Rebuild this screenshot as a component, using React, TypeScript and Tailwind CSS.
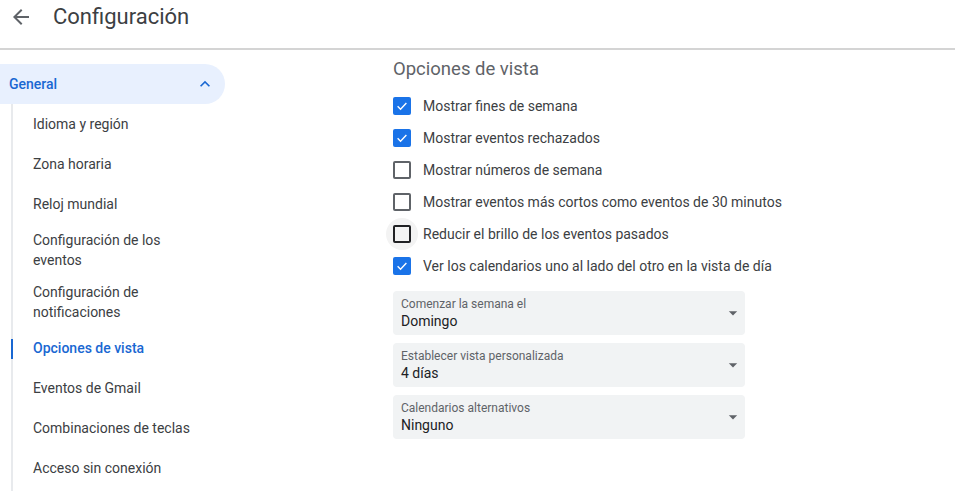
import React from 'react'

const sections = [
  { label: 'Idioma y región' },
  { label: 'Zona horaria' },
  { label: 'Reloj mundial' },
  { label: 'Configuración de los eventos' },
  { label: 'Configuración de notificaciones' },
  { label: 'Opciones de vista', active: true },
  { label: 'Eventos de Gmail' },
  { label: 'Combinaciones de teclas' },
  { label: 'Acceso sin conexión' },
]

const options = [
  { label: 'Mostrar fines de semana', checked: true },
  { label: 'Mostrar eventos rechazados', checked: true },
  { label: 'Mostrar números de semana', checked: false },
  { label: 'Mostrar eventos más cortos como eventos de 30 minutos', checked: false },
  { label: 'Reducir el brillo de los eventos pasados', checked: false, hover: true },
  { label: 'Ver los calendarios uno al lado del otro en la vista de día', checked: true },
]

const selects = [
  { label: 'Comenzar la semana el', value: 'Domingo' },
  { label: 'Establecer vista personalizada', value: '4 días' },
  { label: 'Calendarios alternativos', value: 'Ninguno' },
]

//-----------------------
//  PIECES
//-----------------------
const Checkbox = ({ checked, hover }: { checked: boolean; hover?: boolean }) => (
  <div className="relative flex items-center justify-center w-[18px] h-[18px]">
    {hover && <div className="absolute w-[32px] h-[32px] rounded-full bg-[#f3f3f3]" />}
    {checked ? (
      <div className="relative flex items-center justify-center w-[18px] h-[18px] rounded-[2px] bg-[#1a73e8]">
        <svg width="14" height="14" viewBox="0 0 24 24" fill="none">
          <path d="M4.5 12.5l5 5L19.5 7" stroke="#fff" strokeWidth="2.4" />
        </svg>
      </div>
    ) : (
      <div
        className={`relative w-[18px] h-[18px] rounded-[2px] border-2 ${
          hover ? 'border-[#202124]' : 'border-[#5f6368]'
        }`}
      />
    )}
  </div>
)

const Select = ({ label, value }: { label: string; value: string }) => (
  <div className="flex items-center w-[352px] h-[44px] pl-[8px] pr-[2px] rounded-[4px] bg-[#f1f3f4]">
    <div className="flex-1 flex flex-col">
      <span className="text-[12px] leading-[16px] text-[#5f6368]">{label}</span>
      <span className="text-[14px] leading-[18px] text-[#202124]">{value}</span>
    </div>
    <svg width="20" height="20" viewBox="0 0 24 24">
      <path d="M7 10l5 5 5-5z" fill="#5f6368" />
    </svg>
  </div>
)

//-----------------------
//  RENDER
//-----------------------
export default function App() {
  return (
    <div className="w-[955px] h-[491px] overflow-hidden bg-white text-[#3c4043] font-['Roboto',sans-serif]">
      <header className="flex items-center h-[50px] pb-[14px] border-b-2 border-[#d4d4d4]">
        <svg width="24" height="24" viewBox="0 0 24 24" className="ml-[9px]">
          <path d="M20 11H7.83l5.59-5.59L12 4l-8 8 8 8 1.41-1.41L7.83 13H20v-2z" fill="#5f6368" />
        </svg>
        <h1 className="ml-[20px] text-[22px] leading-[28px] text-[#3c4043] font-['Roboto',sans-serif]">
          Configuración
        </h1>
      </header>

      <div className="flex">
        <nav className="w-[225px] pt-[14px]">
          <div className="flex items-center justify-between h-[40px] pl-[9px] pr-[10px] rounded-r-full bg-[#e8f0fe]">
            <span className="text-[14px] font-medium text-[#1967d2]">General</span>
            <svg width="20" height="20" viewBox="0 0 24 24">
              <path d="M7.41 15.41L12 10.83l4.59 4.58L18 14l-6-6-6 6z" fill="#1967d2" />
            </svg>
          </div>
          <div className="ml-[11px] mt-[11px] border-l-2 border-[#e8eaed]">
            <ul className="-mt-[11px] pb-[10px]">
              {sections.map((item, i) => (
                <li key={i} className="relative flex items-center min-h-[40px] py-[6px] pl-[20px] pr-[16px]">
                  {item.active && (
                    <span className="absolute left-[-2px] top-[11px] bottom-[9px] w-[2px] bg-[#1967d2]" />
                  )}
                  <span
                    className={`text-[14px] leading-[20px] ${
                      item.active ? 'font-medium text-[#1967d2]' : 'text-[#3c4043]'
                    }`}
                  >
                    {item.label}
                  </span>
                </li>
              ))}
            </ul>
          </div>
        </nav>

        <main className="flex-1 pl-[168px] pt-[7px]">
          <h2 className="text-[18.5px] leading-[24px] text-[#5f6368] mb-[9px]">Opciones de vista</h2>
          <div className="flex flex-col">
            {options.map((opt, i) => (
              <label key={i} className="flex items-center h-[32px] gap-[12px]">
                <Checkbox checked={opt.checked} hover={opt.hover} />
                <span className="text-[14px] text-[#3c4043]">{opt.label}</span>
              </label>
            ))}
          </div>
          <div className="flex flex-col gap-[8px] mt-[9px]">
            {selects.map((s, i) => (
              <Select key={i} label={s.label} value={s.value} />
            ))}
          </div>
        </main>
      </div>
    </div>
  )
}
